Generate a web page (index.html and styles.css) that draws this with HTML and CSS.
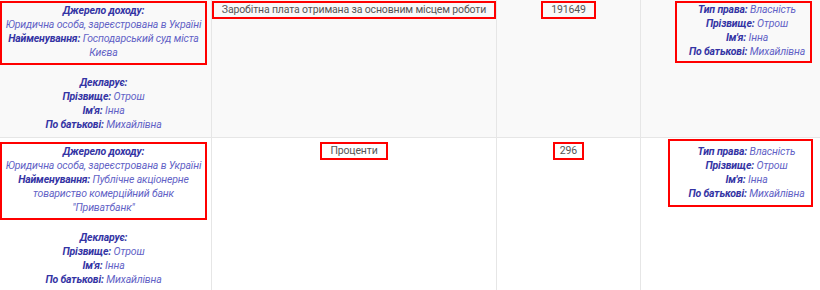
FILE: index.html
```html
<!DOCTYPE html>
<html lang="uk">
<head>
<meta charset="utf-8">
<title>Доходи</title>
<link rel="stylesheet" href="styles.css">
</head>
<body>
<div class="grid">
  <div class="cell cell--src shaded">
    <div class="mark mark--src">
      <div class="lbl">Джерело доходу:</div>
      <div class="val">Юридична особа, зареєстрована в Україні</div>
      <div><span class="lbl">Найменування:</span> <span class="val">Господарський суд міста Києва</span></div>
    </div>
    <div class="person">
      <div class="lbl">Декларує:</div>
      <div><span class="lbl">Прізвище:</span> <span class="val">Отрош</span></div>
      <div><span class="lbl">Ім'я:</span> <span class="val">Інна</span></div>
      <div><span class="lbl">По батькові:</span> <span class="val">Михайлівна</span></div>
    </div>
  </div>
  <div class="cell cell--type shaded">
    <div class="mark mark--wide">Заробітна плата отримана за основним місцем роботи</div>
  </div>
  <div class="cell cell--sum shaded">
    <div class="mark mark--tight">191649</div>
  </div>
  <div class="cell cell--owner shaded">
    <div class="mark mark--owner">
      <div><span class="lbl">Тип права:</span> <span class="val">Власність</span></div>
      <div><span class="lbl">Прізвище:</span> <span class="val">Отрош</span></div>
      <div><span class="lbl">Ім'я:</span> <span class="val">Інна</span></div>
      <div><span class="lbl">По батькові:</span> <span class="val">Михайлівна</span></div>
    </div>
  </div>

  <div class="cell cell--src">
    <div class="mark mark--src">
      <div class="lbl">Джерело доходу:</div>
      <div class="val">Юридична особа, зареєстрована в Україні</div>
      <div><span class="lbl">Найменування:</span> <span class="val">Публічне акціонерне товариство комерційний банк "Приватбанк"</span></div>
    </div>
    <div class="person">
      <div class="lbl">Декларує:</div>
      <div><span class="lbl">Прізвище:</span> <span class="val">Отрош</span></div>
      <div><span class="lbl">Ім'я:</span> <span class="val">Інна</span></div>
      <div><span class="lbl">По батькові:</span> <span class="val">Михайлівна</span></div>
    </div>
  </div>
  <div class="cell cell--type">
    <div class="mark mark--tight">Проценти</div>
  </div>
  <div class="cell cell--sum">
    <div class="mark mark--tight mark--narrow">296</div>
  </div>
  <div class="cell cell--owner">
    <div class="mark mark--owner mark--owner-alt">
      <div><span class="lbl">Тип права:</span> <span class="val">Власність</span></div>
      <div><span class="lbl">Прізвище:</span> <span class="val">Отрош</span></div>
      <div><span class="lbl">Ім'я:</span> <span class="val">Інна</span></div>
      <div><span class="lbl">По батькові:</span> <span class="val">Михайлівна</span></div>
    </div>
  </div>
</div>
</body>
</html>
```
FILE: styles.css
```css
html, body {
  margin: 0;
  padding: 0;
  overflow: hidden;
  background: #ffffff;
}

body {
  font-family: Roboto, "Noto Sans", sans-serif;
  font-size: 10.5px;
  letter-spacing: -0.15px;
  line-height: 14px;
  color: #555555;
}

.grid {
  display: grid;
  grid-template-columns: 212px 285px 144px 206px;
  width: 847px;
  margin-top: -3px;
}

.cell {
  box-sizing: border-box;
  border-right: 1px solid #e6e6e6;
  border-bottom: 1px solid #e6e6e6;
  padding: 4px 0 5px;
  text-align: center;
}

.shaded {
  background: #f9f9f9;
}

.cell--src {
  padding-right: 4px;
}

.mark {
  border: 2px solid #ff0000;
  box-sizing: border-box;
}

.mark--src {
  padding: 1px 0 3px;
}

.mark--wide {
  padding: 0;
}

.mark--tight {
  display: inline-block;
  padding: 0 8px;
}

.mark--narrow {
  padding: 0 5px;
}

.mark--owner {
  display: inline-block;
  padding: 0 5px 2px 12px;
}

.mark--owner-alt {
  padding: 4px 6px 4px 18px;
  margin-top: -3px;
  margin-right: 6px;
}

.person {
  margin-top: 11px;
}

.lbl {
  font-weight: bold;
  font-style: italic;
  color: #3434a4;
}

.val {
  font-style: italic;
  color: #6262c6;
}
```
